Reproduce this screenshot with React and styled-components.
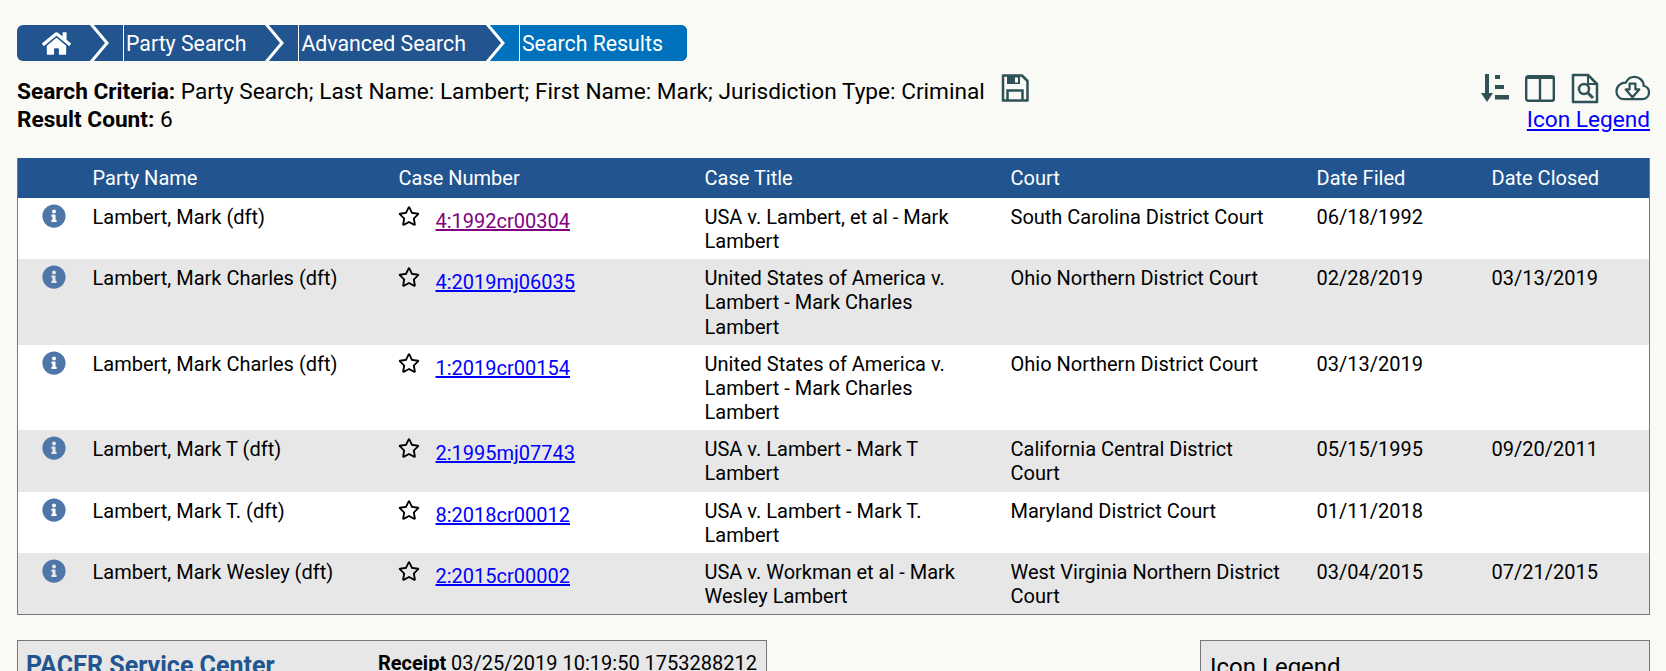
import React from 'react'
import styled, { createGlobalStyle } from 'styled-components'
import { FaHome, FaInfoCircle, FaRegStar } from 'react-icons/fa'

const Global = createGlobalStyle`
    html { overflow: hidden; }
    body {
        margin: 0;
        background-color: #fafaf6;
        background-image: repeating-linear-gradient(0deg, rgba(120, 120, 90, 0.018) 0 1px, transparent 1px 4px);
        font-family: Roboto, "Liberation Sans", sans-serif;
        font-size: 20px;
        line-height: 24.15px;
        color: #000;
    }
`
const Page = styled.div`
    padding: 25px 16px 0 17px;
`
const Breadcrumbs = styled.nav`
    display: inline-flex;
    height: 36px;
    border-radius: 6px;
    overflow: hidden;
    background: #22558f;
    font-size: 21.3px;
    vertical-align: top;
`
const Crumb = styled.a`
    display: flex;
    align-items: center;
    color: #fff;
    text-decoration: none;
    padding: 2px ${p => p.$right}px 0 2px;
    border-left: 1px solid #fff;
    background: ${p => p.$active ? '#0071bc' : '#22558f'};
`
const HomeCrumb = styled.a`
    display: flex;
    align-items: center;
    justify-content: center;
    width: 72px;
    padding-left: 6px;
    box-sizing: border-box;
    color: #fff;
    font-size: 29px;
`
const CriteriaRow = styled.div`
    display: flex;
    justify-content: space-between;
    margin-top: 9px;
    height: 67px;
    font-size: 22.65px;
    line-height: 27.5px;
`
const Criteria = styled.div`
    padding-top: 8px;
    b { font-weight: 700; }
`
const CriteriaLine = styled.div`
    display: flex;
    align-items: center;
    height: 27.5px;
    white-space: pre;
`
const SaveIcon = styled.svg`
    margin: -7px 0 0 16px;
    flex: none;
`
const Tools = styled.div`
    display: flex;
    flex-direction: column;
    align-items: flex-end;
`
const ToolIcons = styled.div`
    display: flex;
    align-items: center;
    gap: 16px;
    height: 36px;
`
const Legend = styled.a`
    color: #00f;
    text-decoration: underline;
`
const Results = styled.table`
    width: 100%;
    margin-top: 21px;
    border-collapse: collapse;
    table-layout: fixed;
    border: 1px solid #777;
    border-top: 0;
    thead { background: #22558f; color: #fff; }
    th {
        font-weight: 400;
        text-align: left;
        height: 40px;
        padding: 0 32px 0 0;
    }
    td {
        vertical-align: top;
        padding: 7px 32px 6px 0;
    }
`
const Row = styled.tr`
    background: ${p => p.$odd ? '#fff' : '#e7e7e7'};
`
const InfoCell = styled.td`
    && { padding-left: 24px; padding-top: 6px; }
    svg { color: #4f76a8; font-size: 24px; display: block; }
`
const CaseCell = styled.div`
    display: flex;
    align-items: flex-start;
    gap: 16px;
    margin-left: -1px;
    svg { font-size: 22px; flex: none; }
`
const CaseLink = styled.a`
    color: ${p => p.$visited ? '#800080' : '#00f'};
    text-decoration: underline;
    margin-top: 4px;
`
const Panels = styled.div`
    display: flex;
    justify-content: space-between;
    margin-top: 25px;
`
const Panel = styled.section`
    box-sizing: border-box;
    width: ${p => p.$width}px;
    height: 90px;
    padding: 10px 9px;
    background: #e7e7e7;
    border: 1px solid #777;
`
const ReceiptHead = styled.div`
    display: flex;
    justify-content: space-between;
    b { font-weight: 700; }
`
const ServiceTitle = styled.h3`
    margin: 2px 0 0 -1px;
    color: #22558f;
    font-size: 25px;
    line-height: 26px;
    font-weight: 700;
`
const LegendTitle = styled.h3`
    margin: 3px 0 0;
    font-size: 24px;
    line-height: 26px;
    font-weight: 400;
`

const Chevron = ({ next }) => (
    <svg width="34" height="36" viewBox="0 0 34 36" style={{ flex: 'none', display: 'block' }}>
        <rect width="34" height="36" fill="#22558f" />
        <polygon points="3,0 34,0 34,36 3,36 17,18" fill={next} />
        <polyline points="2,-1 18,18 2,37" fill="none" stroke="#fff" strokeWidth="3" />
    </svg>
)

const SortIcon = () => (
    <svg width="28" height="28" viewBox="0 0 28 28">
        <path d="M6 0v23" stroke="#2f5257" strokeWidth="4" />
        <path d="M0 19h12l-6 9z" fill="#2f5257" />
        <path d="M14 1h5v4h-5zM14 11h9v4h-9zM14 21h14v4.500H14z" fill="#2f5257" />
    </svg>
)
const ColumnsIcon = () => (
    <svg width="30" height="28" viewBox="0 0 30 28">
        <rect x="1.200" y="2.200" width="27.600" height="24.600" rx="2" fill="none" stroke="#2f5257" strokeWidth="2.400" />
        <path d="M15 3v23" stroke="#2f5257" strokeWidth="2.400" />
        <path d="M2 2h26v3H2z" fill="#2f5257" />
    </svg>
)
const FileSearchIcon = () => (
    <svg width="28" height="31" viewBox="0 0 28 31">
        <path d="M2 2h15l9 9v18H2z" fill="none" stroke="#2f5257" strokeWidth="2.500" strokeLinejoin="round" />
        <path d="M17 2v9h9" fill="none" stroke="#2f5257" strokeWidth="2" />
        <circle cx="13" cy="16" r="5" fill="none" stroke="#2f5257" strokeWidth="2.500" />
        <path d="M17 20l5 5" stroke="#2f5257" strokeWidth="3" />
    </svg>
)
const CloudIcon = () => (
    <svg width="35" height="29" viewBox="0 0 36 28">
        <path d="M9 25h19c4 0 7-3 7-7 0-3.500-2.500-6-5.500-6.800C29.500 6 25 2 20 2c-4 0-7 2-9 6-4.500 0-9.500 3-9.500 9 0 4.500 3.500 8 7.500 8z" fill="none" stroke="#2f5257" strokeWidth="2.300" />
        <path d="M15 9h6v6h4l-7 8-7-8h4z" fill="none" stroke="#2f5257" strokeWidth="2.300" strokeLinejoin="round" />
    </svg>
)
const Floppy = () => (
    <SaveIcon width="28" height="28" viewBox="0 0 28 28">
        <path d="M2 1.500h19l5.500 5.500v19.500H2z" fill="none" stroke="#2f5257" strokeWidth="2.500" strokeLinejoin="round" />
        <path d="M6 2h13v8H6z" fill="#2f5257" />
        <path d="M14 3.500h3v5h-3z" fill="#fafaf6" />
        <path d="M6.500 26v-9.500h15V26" fill="none" stroke="#2f5257" strokeWidth="2.500" />
    </SaveIcon>
)

const rows = [
    { party: 'Lambert, Mark (dft)', no: '4:1992cr00304', visited: true, title: 'USA v. Lambert, et al - Mark Lambert', court: 'South Carolina District Court', filed: '06/18/1992', closed: '' },
    { party: 'Lambert, Mark Charles (dft)', no: '4:2019mj06035', title: 'United States of America v. Lambert - Mark Charles Lambert', court: 'Ohio Northern District Court', filed: '02/28/2019', closed: '03/13/2019' },
    { party: 'Lambert, Mark Charles (dft)', no: '1:2019cr00154', title: 'United States of America v. Lambert - Mark Charles Lambert', court: 'Ohio Northern District Court', filed: '03/13/2019', closed: '' },
    { party: 'Lambert, Mark T (dft)', no: '2:1995mj07743', title: 'USA v. Lambert - Mark T Lambert', court: 'California Central District Court', filed: '05/15/1995', closed: '09/20/2011' },
    { party: 'Lambert, Mark T. (dft)', no: '8:2018cr00012', title: 'USA v. Lambert - Mark T. Lambert', court: 'Maryland District Court', filed: '01/11/2018', closed: '' },
    { party: 'Lambert, Mark Wesley (dft)', no: '2:2015cr00002', title: 'USA v. Workman et al - Mark Wesley Lambert', court: 'West Virginia Northern District Court', filed: '03/04/2015', closed: '07/21/2015' },
]

export default function App() {
    return (
        <Page>
            <Global />
            <Breadcrumbs>
                <HomeCrumb><FaHome /></HomeCrumb>
                <Chevron next="#22558f" />
                <Crumb $right={18}>Party Search</Crumb>
                <Chevron next="#22558f" />
                <Crumb $right={19}>Advanced Search</Crumb>
                <Chevron next="#0071bc" />
                <Crumb $right={24} $active>Search Results</Crumb>
            </Breadcrumbs>
            <CriteriaRow>
                <Criteria>
                    <CriteriaLine>
                        <b>Search Criteria:</b> Party Search; Last Name: Lambert; First Name: Mark; Jurisdiction Type: Criminal
                        <Floppy />
                    </CriteriaLine>
                    <CriteriaLine><b>Result Count:</b> 6</CriteriaLine>
                </Criteria>
                <Tools>
                    <ToolIcons>
                        <SortIcon />
                        <ColumnsIcon />
                        <FileSearchIcon />
                        <CloudIcon />
                    </ToolIcons>
                    <Legend>Icon Legend</Legend>
                </Tools>
            </CriteriaRow>
            <Results>
                <colgroup>
                    <col style={{ width: 75 }} />
                    <col style={{ width: 306 }} />
                    <col style={{ width: 306 }} />
                    <col style={{ width: 306 }} />
                    <col style={{ width: 306 }} />
                    <col style={{ width: 175 }} />
                    <col />
                </colgroup>
                <thead>
                    <tr>
                        <th />
                        <th>Party Name</th>
                        <th>Case Number</th>
                        <th>Case Title</th>
                        <th>Court</th>
                        <th>Date Filed</th>
                        <th>Date Closed</th>
                    </tr>
                </thead>
                <tbody>
                    {rows.map((r, i) => (
                        <Row key={r.no} $odd={i % 2 === 0}>
                            <InfoCell><FaInfoCircle /></InfoCell>
                            <td>{r.party}</td>
                            <td>
                                <CaseCell>
                                    <FaRegStar />
                                    <CaseLink $visited={r.visited}>{r.no}</CaseLink>
                                </CaseCell>
                            </td>
                            <td>{r.title}</td>
                            <td>{r.court}</td>
                            <td>{r.filed}</td>
                            <td>{r.closed}</td>
                        </Row>
                    ))}
                </tbody>
            </Results>
            <Panels>
                <Panel $width={750}>
                    <ReceiptHead>
                        <ServiceTitle>PACER Service Center</ServiceTitle>
                        <div><b>Receipt</b> 03/25/2019 10:19:50 1753288212</div>
                    </ReceiptHead>
                </Panel>
                <Panel $width={450}>
                    <LegendTitle>Icon Legend</LegendTitle>
                </Panel>
            </Panels>
        </Page>
    )
}
